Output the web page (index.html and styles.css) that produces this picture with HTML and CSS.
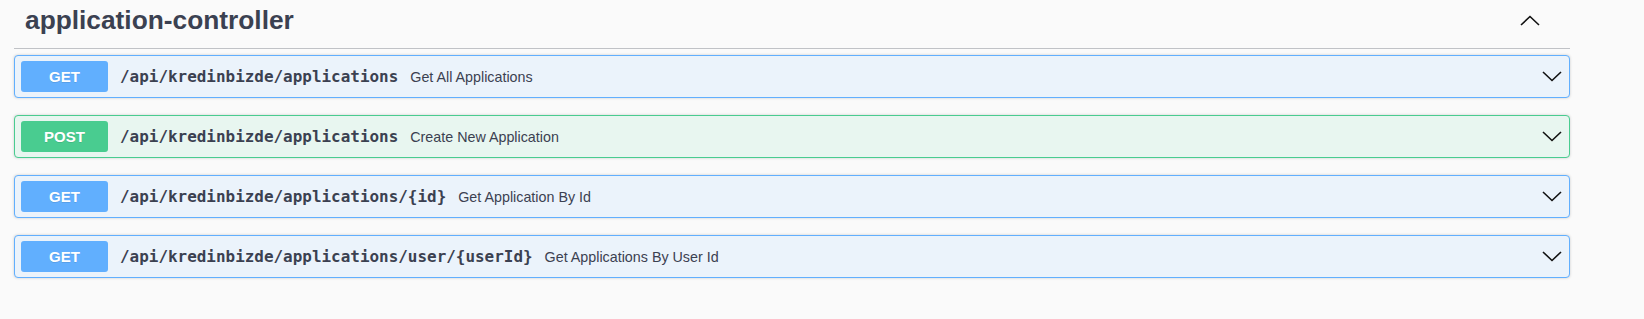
FILE: index.html
```html
<!DOCTYPE html>
<html lang="en">

<head>
  <meta charset="UTF-8">
  <title>application-controller</title>
  <link rel="stylesheet" href="styles.css">
</head>

<body>
  <div class="tag-section">
    <h3 class="tag-title">
      <span>application-controller</span>
      <svg class="arrow-up" width="20" height="11" viewBox="0 0 20 11">
        <polyline points="1,10 10,1.5 19,10" fill="none" stroke="#111" stroke-width="1.6" />
      </svg>
    </h3>

    <div class="opblock opblock-get">
      <div class="summary">
        <span class="method">GET</span>
        <span class="path">/api/kredinbizde/applications</span>
        <span class="description">Get All Applications</span>
        <svg class="arrow-down" width="20" height="11" viewBox="0 0 20 11">
          <polyline points="1,1 10,9.5 19,1" fill="none" stroke="#111" stroke-width="1.6" />
        </svg>
      </div>
    </div>

    <div class="opblock opblock-post">
      <div class="summary">
        <span class="method">POST</span>
        <span class="path">/api/kredinbizde/applications</span>
        <span class="description">Create New Application</span>
        <svg class="arrow-down" width="20" height="11" viewBox="0 0 20 11">
          <polyline points="1,1 10,9.5 19,1" fill="none" stroke="#111" stroke-width="1.6" />
        </svg>
      </div>
    </div>

    <div class="opblock opblock-get">
      <div class="summary">
        <span class="method">GET</span>
        <span class="path">/api/kredinbizde/applications/{id}</span>
        <span class="description">Get Application By Id</span>
        <svg class="arrow-down" width="20" height="11" viewBox="0 0 20 11">
          <polyline points="1,1 10,9.5 19,1" fill="none" stroke="#111" stroke-width="1.6" />
        </svg>
      </div>
    </div>

    <div class="opblock opblock-get">
      <div class="summary">
        <span class="method">GET</span>
        <span class="path">/api/kredinbizde/applications/user/{userId}</span>
        <span class="description">Get Applications By User Id</span>
        <svg class="arrow-down" width="20" height="11" viewBox="0 0 20 11">
          <polyline points="1,1 10,9.5 19,1" fill="none" stroke="#111" stroke-width="1.6" />
        </svg>
      </div>
    </div>
  </div>
</body>

</html>
```

FILE: styles.css
```css
body {
  font-family: "Liberation Sans", Arial, sans-serif;
  background-color: #fafafa;
  color: #3b4151;
  margin: 0;
  padding: 0;
}

.tag-section {
  width: 1556px;
  margin-left: 14px;
}

.tag-title {
  display: flex;
  align-items: center;
  justify-content: space-between;
  height: 40px;
  margin: 0 0 6px;
  padding: 0 30px 8px 11px;
  border-bottom: 1px solid rgba(59, 65, 81, 0.3);
  font-size: 26.3px;
  font-weight: bold;
  color: #3b4151;
}

.arrow-up {
  display: block;
}

.opblock {
  border: 1px solid;
  border-radius: 4px;
  box-shadow: 0 0 3px rgba(0, 0, 0, 0.19);
  margin-bottom: 17px;
}

.opblock-get {
  background-color: #ebf3fb;
  border-color: #61affe;
}

.opblock-post {
  background-color: #e8f6f0;
  border-color: #49cc90;
}

.summary {
  display: flex;
  align-items: center;
  padding: 5px 7px 5px 6px;
}

.method {
  width: 87px;
  height: 31px;
  line-height: 31px;
  border-radius: 3px;
  text-align: center;
  color: #fff;
  font-size: 15px;
  font-weight: bold;
  text-shadow: 0 1px 0 rgba(0, 0, 0, 0.1);
}

.opblock-get .method {
  background-color: #61affe;
}

.opblock-post .method {
  background-color: #49cc90;
}

.path {
  margin-left: 12px;
  font-family: "DejaVu Sans Mono", monospace;
  font-size: 15.95px;
  font-weight: bold;
  color: #3b4151;
}

.description {
  flex: 1;
  margin-left: 12px;
  font-size: 14.3px;
  color: #3b4151;
}

.arrow-down {
  display: block;
}
```
